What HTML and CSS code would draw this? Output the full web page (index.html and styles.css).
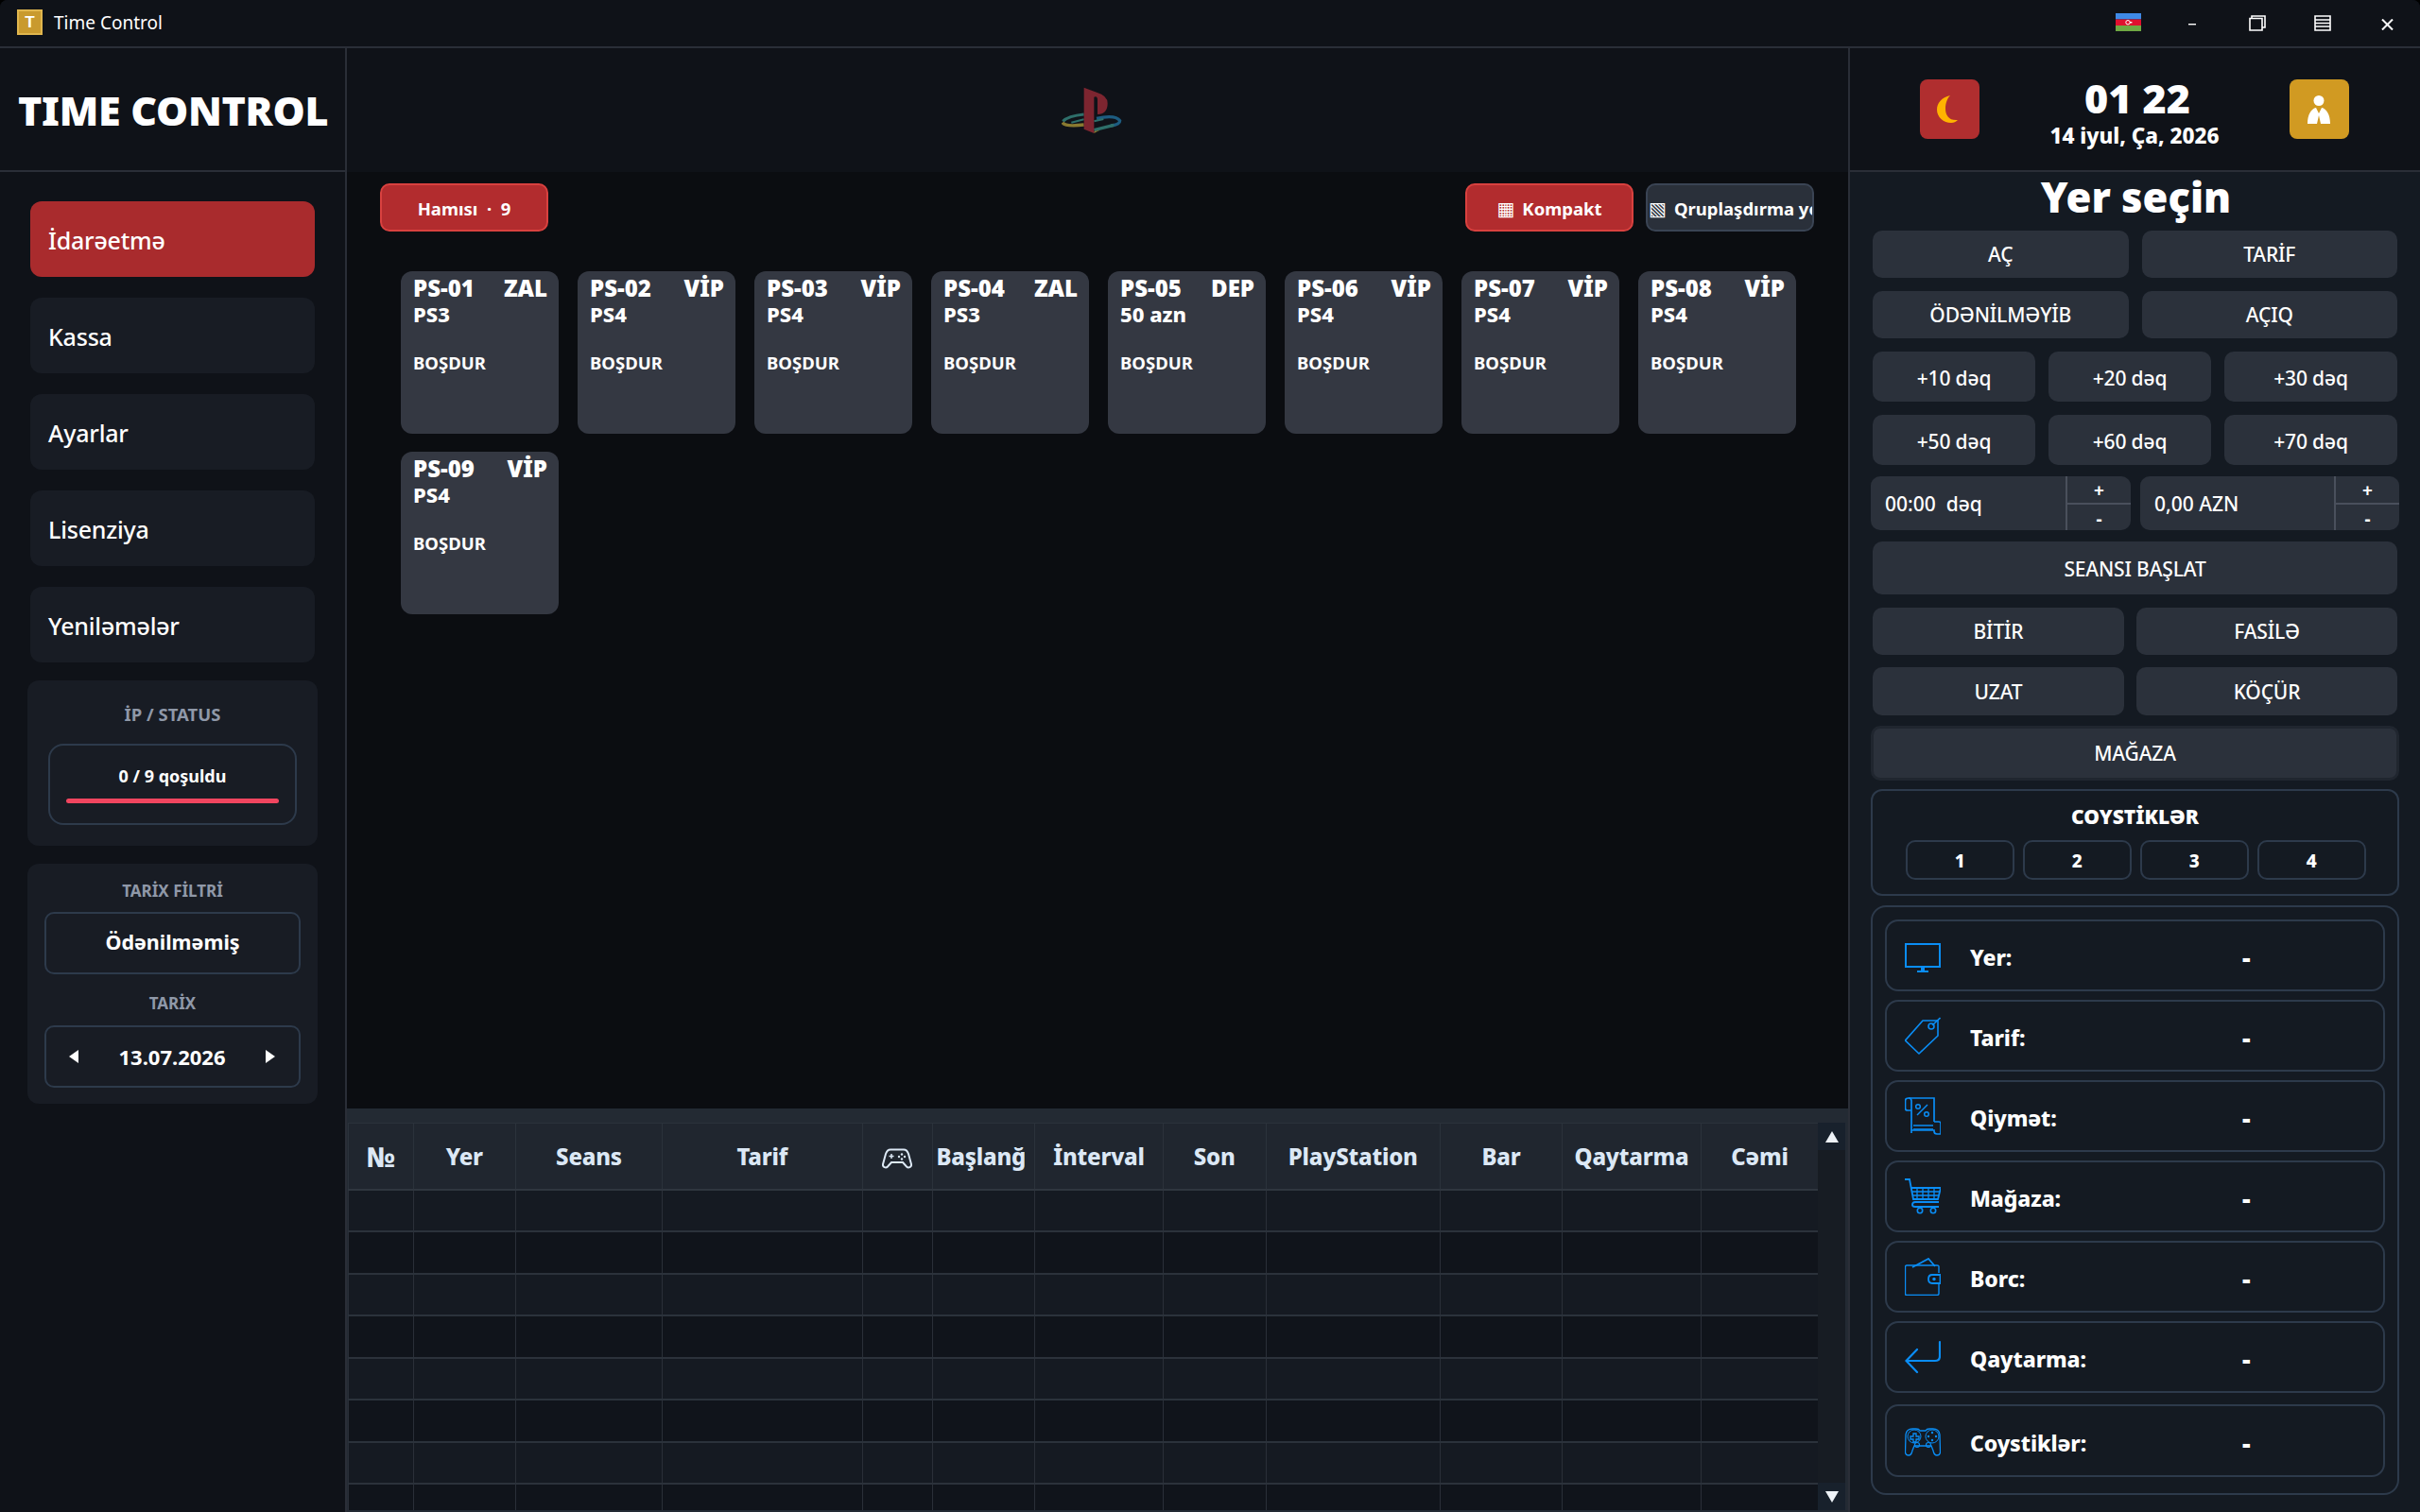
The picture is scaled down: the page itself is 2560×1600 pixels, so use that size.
FILE: index.html
```html
<!DOCTYPE html>
<html>
<head>
    <title>Time Control</title>
    <meta name="viewport" content="width=device-width, initial-scale=1.0">
    <link rel="stylesheet" href="styles.css">
</head>
<body>
<div class="app">
    <header class="titlebar">
        <div class="app-icon">T</div>
        <span class="app-name">Time Control</span>
        <div class="win-controls">
            <svg class="flag" viewBox="0 0 27 19"><rect width="27" height="6.5" fill="#3f8ae6"/><rect y="6.5" width="27" height="6.5" fill="#e0102f"/><rect y="13" width="27" height="6" fill="#6fa843"/><circle cx="13" cy="9.7" r="2.2" fill="none" stroke="#fff" stroke-width="1"/><rect x="15" y="9" width="2.4" height="1.4" fill="#fff"/></svg>
            <svg class="win-min" viewBox="0 0 8 2"><rect width="8" height="1.4" fill="#fff"/></svg>
            <svg class="win-restore" viewBox="0 0 18 17"><path d="M1 3.500H14V16H1Z M3 3V1H17V13H14" fill="none" stroke="#fff" stroke-width="1.6"/></svg>
            <svg class="win-menu" viewBox="0 0 18 17"><path d="M1 1H17V16H1Z M1 5H17 M1 8.5H17 M1 12H17" fill="none" stroke="#fff" stroke-width="1.6"/></svg>
            <svg class="win-close" viewBox="0 0 13 12"><path d="M1 .5 12 11.5 M12 .5 1 11.5" stroke="#fff" stroke-width="2" fill="none"/></svg>
        </div>
    </header>

    <div class="top">
        <div class="brand">TIME CONTROL</div>
        <div class="logo-cell">
            <svg class="ps-logo" viewBox="129 63 228 147">
                <path d="M200 150Q150 155 133 172" fill="none" stroke="#2e6f6a" stroke-width="9"/>
                <path d="M132 176Q140 190 200 183" fill="none" stroke="#8a7a30" stroke-width="10"/>
                <path d="M240 163Q300 150 314 170Q314 182 285 186" fill="none" stroke="#1d5c80" stroke-width="10"/>
                <path d="M232 200 295 184" fill="none" stroke="#2e6f6a" stroke-width="10"/>
                <path d="M160 176 200 166" fill="none" stroke="#2e6f6a" stroke-width="6"/>
                <path d="M232 172 262 165" fill="none" stroke="#2e6f6a" stroke-width="6"/>
                <path d="M232 204 250 200 232 210Z" fill="#8a7a30"/>
                <path d="M200 65V197L232 210V95Q243 90 243 105V150Q275 150 275 115Q275 90 240 80Z" fill="#7d2530"/>
            </svg>
        </div>
        <div class="clock-cell">
            <div class="square-btn red-btn">
                <svg class="moon" viewBox="0 0 22 29" width="22" height="29"><path d="M14 0C5 2 0 8 0 15 0 23 7 29 15 29 18 29 20 28 22 26 13 27 9 21 9 14 9 8 11 3 14 0Z" fill="#ffb300"/></svg>
            </div>
            <div class="clock">
                <div class="clock-time">01 22</div>
                <div class="clock-date">14 iyul, Ça, 2026</div>
            </div>
            <div class="square-btn gold-btn">
                <svg viewBox="0 0 26 30" width="26" height="30"><circle cx="13" cy="5.5" r="5.5" fill="#fff"/><path d="M1 30C1 20 5 14 10 13L13 19 16 13C21 14 25 20 25 30H15L13 21 11 30Z" fill="#fff"/></svg>
            </div>
        </div>
    </div>

    <div class="content">
        <aside class="sidebar">
            <div class="nav-btn active">İdarəetmə</div>
            <div class="nav-btn">Kassa</div>
            <div class="nav-btn">Ayarlar</div>
            <div class="nav-btn">Lisenziya</div>
            <div class="nav-btn">Yeniləmələr</div>

            <div class="side-card status-card">
                <div class="side-title status-title">İP / STATUS</div>
                <div class="status-box">
                    <span>0 / 9 qoşuldu</span>
                    <div class="status-bar"></div>
                </div>
            </div>

            <div class="side-card filter-card">
                <div class="side-title filter-title">TARİX FİLTRİ</div>
                <div class="filter-box">Ödənilməmiş</div>
                <div class="side-title date-title">TARİX</div>
                <div class="filter-box date-box">
                    <svg viewBox="0 0 10 14" width="10" height="16"><path d="M10 0V14L0 7Z" fill="#fff"/></svg>
                    <span>13.07.2026</span>
                    <svg viewBox="0 0 10 14" width="10" height="16"><path d="M0 0V14L10 7Z" fill="#fff"/></svg>
                </div>
            </div>
        </aside>

        <main class="main">
            <div class="board">
                <div class="toolbar">
                    <button class="tool-btn tool-red">Hamısı &nbsp;·&nbsp; 9</button>
                    <div class="toolbar-right">
                        <button class="tool-btn tool-red"><span class="glyph">▦</span>Kompakt</button>
                        <button class="tool-btn tool-dark"><span class="glyph">▧</span>Qruplaşdırma yox</button>
                    </div>
                </div>
                <div class="cards">
                    <div class="card"><div class="card-head"><span>PS-01</span><span>ZAL</span></div><div class="card-type">PS3</div><div class="card-state">BOŞDUR</div></div>
                    <div class="card"><div class="card-head"><span>PS-02</span><span>VİP</span></div><div class="card-type">PS4</div><div class="card-state">BOŞDUR</div></div>
                    <div class="card"><div class="card-head"><span>PS-03</span><span>VİP</span></div><div class="card-type">PS4</div><div class="card-state">BOŞDUR</div></div>
                    <div class="card"><div class="card-head"><span>PS-04</span><span>ZAL</span></div><div class="card-type">PS3</div><div class="card-state">BOŞDUR</div></div>
                    <div class="card"><div class="card-head"><span>PS-05</span><span>DEP</span></div><div class="card-type">50 azn</div><div class="card-state">BOŞDUR</div></div>
                    <div class="card"><div class="card-head"><span>PS-06</span><span>VİP</span></div><div class="card-type">PS4</div><div class="card-state">BOŞDUR</div></div>
                    <div class="card"><div class="card-head"><span>PS-07</span><span>VİP</span></div><div class="card-type">PS4</div><div class="card-state">BOŞDUR</div></div>
                    <div class="card"><div class="card-head"><span>PS-08</span><span>VİP</span></div><div class="card-type">PS4</div><div class="card-state">BOŞDUR</div></div>
                    <div class="card"><div class="card-head"><span>PS-09</span><span>VİP</span></div><div class="card-type">PS4</div><div class="card-state">BOŞDUR</div></div>
                </div>
            </div>

            <div class="table-area">
                <div class="table-clip">
                    <table class="sessions">
                        <colgroup>
                            <col class="c1"><col class="c2"><col class="c3"><col class="c4"><col class="c5"><col class="c6">
                            <col class="c7"><col class="c8"><col class="c9"><col class="c10"><col class="c11"><col class="c12">
                        </colgroup>
                        <thead>
                            <tr>
                                <th class="th-no">№</th><th>Yer</th><th>Seans</th><th>Tarif</th>
                                <th><svg class="th-pad" viewBox="0 0 32 22" width="32" height="22"><path d="M9 1.5H23C25.5 1.5 27 3 28 6L31 17C31.5 20 28 21.500 26 19.500L22 15H10L6 19.500C4 21.500.5 20 1 17L4 6C5 3 6.500 1.5 9 1.500Z" fill="none" stroke="#dce8f5" stroke-width="2"/><path d="M10 6V11M7.500 8.500H12.500" stroke="#dce8f5" stroke-width="1.500"/><circle cx="21" cy="6.500" r="1.200" fill="#dce8f5"/><circle cx="24" cy="9" r="1.200" fill="#dce8f5"/><circle cx="18" cy="9" r="1.200" fill="#dce8f5"/><circle cx="21" cy="11.500" r="1.200" fill="#dce8f5"/></svg></th>
                                <th><span class="th-clip">Başlanğıc</span></th><th>İnterval</th><th>Son</th><th>PlayStation</th><th>Bar</th><th>Qaytarma</th><th>Cəmi</th>
                            </tr>
                        </thead>
                        <tbody>
                            <tr><td></td><td></td><td></td><td></td><td></td><td></td><td></td><td></td><td></td><td></td><td></td><td></td></tr>
                            <tr><td></td><td></td><td></td><td></td><td></td><td></td><td></td><td></td><td></td><td></td><td></td><td></td></tr>
                            <tr><td></td><td></td><td></td><td></td><td></td><td></td><td></td><td></td><td></td><td></td><td></td><td></td></tr>
                            <tr><td></td><td></td><td></td><td></td><td></td><td></td><td></td><td></td><td></td><td></td><td></td><td></td></tr>
                            <tr><td></td><td></td><td></td><td></td><td></td><td></td><td></td><td></td><td></td><td></td><td></td><td></td></tr>
                            <tr><td></td><td></td><td></td><td></td><td></td><td></td><td></td><td></td><td></td><td></td><td></td><td></td></tr>
                            <tr><td></td><td></td><td></td><td></td><td></td><td></td><td></td><td></td><td></td><td></td><td></td><td></td></tr>
                            <tr><td></td><td></td><td></td><td></td><td></td><td></td><td></td><td></td><td></td><td></td><td></td><td></td></tr>
                        </tbody>
                    </table>
                </div>
                <div class="scrollbar">
                    <div class="scroll-btn"><svg viewBox="0 0 14 12" width="14" height="12"><path d="M7 0 14 12H0Z" fill="#eef3f8"/></svg></div>
                    <div class="scroll-btn"><svg viewBox="0 0 14 12" width="14" height="12"><path d="M7 12 14 0H0Z" fill="#eef3f8"/></svg></div>
                </div>
            </div>
        </main>

        <aside class="panel">
            <h2 class="panel-title">Yer seçin</h2>
            <div class="row two">
                <button class="act">AÇ</button><button class="act">TARİF</button>
            </div>
            <div class="row two">
                <button class="act">ÖDƏNİLMƏYİB</button><button class="act">AÇIQ</button>
            </div>
            <div class="row three tall">
                <button class="act">+10 dəq</button><button class="act">+20 dəq</button><button class="act">+30 dəq</button>
            </div>
            <div class="row three tall">
                <button class="act">+50 dəq</button><button class="act">+60 dəq</button><button class="act">+70 dəq</button>
            </div>
            <div class="row spin-row wide">
                <div class="spin spin-left"><span class="spin-value">00:00&nbsp; dəq</span><div class="spin-btns"><span>+</span><span>-</span></div></div>
                <div class="spin spin-right"><span class="spin-value">0,00 AZN</span><div class="spin-btns"><span>+</span><span>-</span></div></div>
            </div>
            <div class="row start-row"><button class="act">SEANSI BAŞLAT</button></div>
            <div class="row action action-1">
                <button class="act">BİTİR</button><button class="act">FASİLƏ</button>
            </div>
            <div class="row action action-2">
                <button class="act">UZAT</button><button class="act">KÖÇÜR</button>
            </div>
            <div class="row shop-row wide"><button class="act shop">MAĞAZA</button></div>

            <section class="pads wide">
                <div class="pads-title">COYSTİKLƏR</div>
                <div class="pads-list">
                    <div class="pad-num">1</div><div class="pad-num">2</div><div class="pad-num">3</div><div class="pad-num">4</div>
                </div>
            </section>

            <section class="info wide">
                <div class="info-row">
                    <svg class="info-ico" viewBox="0 0 38 38"><path d="M1 7H37V31H1Z" fill="none" stroke="#0a8df5" stroke-width="2"/><path d="M17 31H21V35H17Z M13 35H25V37H13Z" fill="#0a8df5"/></svg>
                    <span class="info-label">Yer:</span><span class="info-value">-</span>
                </div>
                <div class="info-row">
                    <svg class="info-ico" viewBox="0 0 38 40"><path d="M19 4H35V20L15 39 .5 25Z" fill="none" stroke="#0a8df5" stroke-width="1.600" stroke-linejoin="round"/><circle cx="28" cy="10" r="3" fill="none" stroke="#0a8df5" stroke-width="1.600"/><path d="M29 9 37.500 1" stroke="#0a8df5" stroke-width="1.600"/></svg>
                    <span class="info-label">Tarif:</span><span class="info-value">-</span>
                </div>
                <div class="info-row">
                    <svg class="info-ico" viewBox="0 0 38 40"><path d="M4 1H31V26 M7 4V38 M31 26H36Q38 26 38 28V39H34Q31 39 31 36V35H7" fill="none" stroke="#0a8df5" stroke-width="1.700"/><path d="M7 14H3Q.5 14 .5 12V4Q.5 1 4 1 7 1 7 4" fill="none" stroke="#0a8df5" stroke-width="1.700"/><path d="M13 19 24 8" stroke="#0a8df5" stroke-width="1.500"/><circle cx="14" cy="10" r="2.300" fill="none" stroke="#0a8df5" stroke-width="1.500"/><circle cx="23" cy="18" r="2.300" fill="none" stroke="#0a8df5" stroke-width="1.500"/><path d="M9 30H30 M9 34H30" stroke="#0a8df5" stroke-width="1.700"/></svg>
                    <span class="info-label">Qiymət:</span><span class="info-value">-</span>
                </div>
                <div class="info-row">
                    <svg class="info-ico" viewBox="0 0 38 38"><path d="M0 1H5L9 22H35L38 10H6" fill="none" stroke="#0a8df5" stroke-width="1.800"/><path d="M8 14H37 M9 18H36 M13 10V22 M19 10V22 M25 10V22 M31 10V22" stroke="#0a8df5" stroke-width="1.300" fill="none"/><path d="M36 25H11Q8 25 8 28 8 30 11 30H36" fill="none" stroke="#0a8df5" stroke-width="1.800"/><circle cx="16" cy="34" r="2.700" fill="none" stroke="#0a8df5" stroke-width="1.600"/><circle cx="30" cy="34" r="2.700" fill="none" stroke="#0a8df5" stroke-width="1.600"/></svg>
                    <span class="info-label">Mağaza:</span><span class="info-value">-</span>
                </div>
                <div class="info-row">
                    <svg class="info-ico" viewBox="0 0 38 40"><path d="M36 16V9Q36 8 34 8H2Q.5 8 .5 10V38Q.5 39.500 2 39.500H34Q36 39.500 36 38V27" fill="none" stroke="#0a8df5" stroke-width="1.400"/><path d="M8 10 25 1 32 9" fill="none" stroke="#0a8df5" stroke-width="1.800"/><path d="M37.500 18V27H29Q25 27 25 22.500 25 18 29 18Z" fill="none" stroke="#0a8df5" stroke-width="1.800"/><circle cx="31" cy="22.500" r="1.700" fill="#0a8df5"/></svg>
                    <span class="info-label">Borc:</span><span class="info-value">-</span>
                </div>
                <div class="info-row">
                    <svg class="info-ico" viewBox="0 0 38 34"><path d="M37 1V16Q37 21 32 21H2" fill="none" stroke="#0a8df5" stroke-width="2.200" stroke-linecap="round"/><path d="M13 9 1.500 21 13 33" fill="none" stroke="#0a8df5" stroke-width="2.200" stroke-linecap="round"/></svg>
                    <span class="info-label">Qaytarma:</span><span class="info-value">-</span>
                </div>
                <div class="info-row last">
                    <svg class="info-ico" viewBox="0 0 38 30"><path d="M8 1H12Q15 1 16 3H22Q23 1 26 1H30Q36 1 37 7L37.500 26Q37 29 34 29 31 29 30 24L28 19H10L8 24Q7 29 4 29 1 29 .5 26L1 7Q2 1 8 1Z" fill="none" stroke="#0a8df5" stroke-width="1.300"/><path d="M6 9H9V6H12V9H15V12H12V15H9V12H6Z" fill="none" stroke="#0a8df5" stroke-width="1.300"/><circle cx="10" cy="9" r="7" fill="none" stroke="#0a8df5" stroke-width="1"/><circle cx="29" cy="9" r="7" fill="none" stroke="#0a8df5" stroke-width="1"/><circle cx="29" cy="5" r="1.200" fill="#0a8df5"/><circle cx="25" cy="9" r="1.200" fill="#0a8df5"/><circle cx="33" cy="9" r="1.200" fill="#0a8df5"/><circle cx="29" cy="13" r="1.200" fill="#0a8df5"/><circle cx="13" cy="18" r="2.500" fill="none" stroke="#0a8df5" stroke-width="1.100"/><circle cx="25" cy="18" r="2.500" fill="none" stroke="#0a8df5" stroke-width="1.100"/></svg>
                    <span class="info-label">Coystiklər:</span><span class="info-value">-</span>
                </div>
            </section>
        </aside>
    </div>
</div>
</body>
</html>
```

FILE: styles.css
```css
* { box-sizing: border-box; }

html, body { margin: 0; height: 100%; background: #000; }

body {
  font-family: "Noto Sans", "Open Sans", Arial, sans-serif;
  color: #fff;
}

.app {
  width: 2560px;
  height: 1600px;
  display: flex;
  flex-direction: column;
  background: #0f1218;
  border-radius: 8px 8px 0 0;
  overflow: hidden;
}

/* title bar */
.titlebar {
  height: 51px;
  flex: none;
  display: flex;
  align-items: center;
  padding: 0 0 2px 18px;
  background: #0f1218;
  border-bottom: 2px solid #2a2e37;
}
.app-icon {
  width: 27px;
  height: 27px;
  background: #c99a2e;
  border: 2px solid #e0b64e;
  font: 700 17px/23px "Liberation Sans", sans-serif;
  text-align: center;
}
.app-name { margin-left: 12px; font-size: 19px; }
.win-controls { margin-left: auto; position: relative; width: 340px; height: 49px; }
.win-controls svg { position: absolute; }
.flag { left: 18px; top: 15px; width: 27px; height: 19px; }
.win-min { left: 95px; top: 26px; width: 8px; height: 2px; }
.win-restore { left: 159px; top: 17px; width: 18px; height: 17px; }
.win-menu { left: 228px; top: 17px; width: 18px; height: 17px; }
.win-close { left: 299px; top: 21px; width: 13px; height: 12px; }

/* top row */
.top {
  height: 131px;
  flex: none;
  display: grid;
  grid-template-columns: 367px 1590px 1fr;
  border-bottom: 2px solid #2a2e37;
}
.brand {
  border-right: 2px solid #2a2e37;
  padding-left: 19px;
  line-height: 131px;
  font-size: 43px;
  font-weight: 900;
  letter-spacing: -.3px;
}
.logo-cell {
  display: flex;
  align-items: center;
  justify-content: center;
  border-right: 2px solid #2a2e37;
  background: #0f1218;
}
.ps-logo { width: 76px; height: 49px; }
.clock-cell {
  display: flex;
  justify-content: space-between;
  align-items: flex-start;
  padding: 33px 75px 0 74px;
}
.square-btn {
  width: 63px;
  height: 63px;
  border-radius: 8px;
  display: flex;
  align-items: center;
  justify-content: center;
}
.red-btn { background: #b02e2f; }
.gold-btn { background: #d19a22; }
.moon { margin-right: 6px; }
.clock { text-align: center; margin-left: 6px; }
.clock-time { font-size: 43px; font-weight: 900; line-height: 44px; margin-top: -2px; }
.clock-date { font-size: 22.5px; font-weight: 800; line-height: 30px; margin-top: 3px; padding-right: 6px; }

/* main content */
.content {
  flex: 1;
  min-height: 0;
  display: grid;
  grid-template-columns: 367px 1590px 1fr;
  grid-template-rows: minmax(0, 1fr);
}

.sidebar {
  background: #0f1218;
  border-right: 2px solid #2a2e37;
  padding: 31px 0 0 32px;
  display: flex;
  flex-direction: column;
  gap: 22px;
}
.nav-btn {
  width: 301px;
  height: 80px;
  background: #181c24;
  border-radius: 12px;
  padding: 2px 0 0 19px;
  line-height: 78px;
  font-size: 25px;
  font-weight: 500;
  letter-spacing: -.2px;
}
.nav-btn.active { background: #a92b2d; }

.side-card {
  width: 307px;
  margin-left: -3px;
  background: #181c24;
  border-radius: 12px;
  text-align: center;
}
.status-card { height: 175px; margin-top: -3px; padding: 22px 22px 0; }
.side-title { font-size: 17px; font-weight: 700; line-height: 28px; color: #8f98a8; }
.status-title { font-size: 18.500px; }
.status-box {
  height: 86px;
  margin-top: 17px;
  border: 2px solid #2d3a4b;
  border-radius: 16px;
  font-size: 18px;
  font-weight: 700;
  padding-top: 18px;
  line-height: 28px;
}
.status-bar {
  height: 5px;
  margin: 10px 17px 0;
  border-radius: 3px;
  background: #f0455f;
}
.filter-card { height: 254px; margin-top: -3px; padding: 15px 18px 0; }
.filter-box {
  height: 66px;
  margin-top: 8px;
  border: 2px solid #2d3a4b;
  border-radius: 10px;
  font-size: 21.500px;
  font-weight: 700;
  line-height: 60px;
}
.date-title { margin-top: 17px; }
.date-box {
  margin-top: 9px;
  font-size: 22px;
  display: flex;
  align-items: center;
  justify-content: space-between;
  padding: 0 25px 0 24px;
}

.main { display: flex; flex-direction: column; min-width: 0; min-height: 0; background: #0b0d11; border-right: 2px solid #2a2e37; }
.board { height: 991px; flex: none; padding: 12px 36px 0 35px; }
.toolbar { display: flex; justify-content: space-between; }
.toolbar-right { display: flex; gap: 13px; }
.tool-btn {
  height: 51px;
  width: 178px;
  padding: 2px 0 0;
  border-radius: 10px;
  font-family: inherit;
  font-size: 18.500px;
  font-weight: 700;
  color: #fff;
  white-space: nowrap;
  overflow: hidden;
}
.tool-red { background: #b22c2e; border: 2px solid #d9413f; }
.tool-dark { background: #2a303a; border: 2px solid #3a4454; text-align: left; padding-left: 1px; }
.glyph { font-family: "DejaVu Sans", sans-serif; font-size: 20px; font-weight: 400; margin-right: 8px; }

.cards {
  margin: 42px 0 0 22px;
  display: grid;
  grid-template-columns: repeat(8, 167px);
  grid-auto-rows: 172px;
  column-gap: 20px;
  row-gap: 19px;
}
.card { background: #343842; border-radius: 12px; padding: 3px 12px 0 13px; }
.card-head { display: flex; justify-content: space-between; font-size: 24px; font-weight: 900; line-height: 30px; }
.card-type { font-size: 22px; font-weight: 800; line-height: 25px; }
.card-state { font-size: 18.500px; font-weight: 700; line-height: 26px; margin-top: 26px; }

/* table */
.table-area {
  flex: 1;
  min-height: 0;
  display: flex;
  background: #232a33;
  padding: 15px 1px 2px 1px;
}
.table-clip { width: 1555px; overflow: hidden; }
.sessions { width: 1555px; table-layout: fixed; border-collapse: collapse; }
.c1 { width: 68.5px; } .c2 { width: 108.5px; } .c3 { width: 155px; } .c4 { width: 211.5px; }
.c5 { width: 74px; } .c6 { width: 108.5px; } .c7 { width: 136px; } .c8 { width: 108.5px; }
.c9 { width: 184.5px; } .c10 { width: 129px; } .c11 { width: 147px; } .c12 { width: 124px; }
.sessions th {
  height: 70px;
  padding: 0 7px;
  background: #20262f;
  border: 1px solid #2b323b;
  border-bottom: 2px solid #2f363f;
  color: #dce8f5;
  font-size: 24px;
  font-weight: 800;
  letter-spacing: -.2px;
  white-space: nowrap;
  overflow: hidden;
}
.sessions th.th-no { font-size: 29px; padding: 0; }
.th-clip { display: block; width: 93px; margin-left: -3px; overflow: hidden; text-align: left; }
.sessions td {
  height: 44.5px;
  padding: 0;
  border: 1px solid #2a2f38;
  border-bottom: 2px solid #2b323b;
}
.sessions tbody tr:nth-child(odd) { background: #151a22; }
.sessions tbody tr:nth-child(even) { background: #10141b; }
.th-pad { vertical-align: middle; }
.scrollbar {
  width: 29px;
  background: #171c23;
  display: flex;
  flex-direction: column;
  justify-content: space-between;
}
.scroll-btn {
  height: 29px;
  background: #18212c;
  display: flex;
  align-items: center;
  justify-content: center;
}

/* right panel */
.panel { background: #141a22; padding: 0 24px; display: flex; flex-direction: column; }
.panel-title { margin: 0; height: 62px; font-size: 43.500px; font-weight: 900; line-height: 52px; text-align: center; padding-left: 2px; }
.row { display: grid; gap: 14px; margin-bottom: 14px; }
.two { grid-template-columns: 1fr 1fr; height: 50px; }
.three { grid-template-columns: 172px 172px 1fr; height: 53px; }
.three.tall + .wide { margin-top: -2px; }
.act {
  border: none;
  border-radius: 10px;
  background: #2b313b;
  color: #fff;
  font-family: inherit;
  font-size: 21px;
  font-weight: 500;
  letter-spacing: -.15px;
  padding: 2px 0 0;
}
.two .act, .action .act, .act.shop { padding-top: 0; }
.wide { margin-left: -2px; margin-right: -2px; }
.spin-row { grid-template-columns: 275px 274px; gap: 10px; height: 57px; margin-bottom: 12px; }
.spin { display: flex; background: #2b313b; border-radius: 10px; overflow: hidden; }
.spin-value { flex: 1; padding-left: 15px; line-height: 59px; font-size: 21px; font-weight: 500; }
.spin-left .spin-btns { width: 69px; }
.spin-right .spin-btns { width: 69px; }
.spin-btns { display: flex; flex-direction: column; border-left: 2px solid #4a505c; }
.spin-btns span { flex: 1; text-align: center; font-size: 19px; font-weight: 700; line-height: 31px; overflow: hidden; }
.spin-btns span:first-child { border-bottom: 2px solid #4a505c; }
.start-row { height: 56px; }
.action { grid-template-columns: 266px 1fr; gap: 13px; }
.action-1 { height: 50px; margin-bottom: 13px; }
.action-2 { height: 51px; margin-bottom: 11px; }
.shop-row { height: 58px; margin-bottom: 9px; }
.shop { border: 3px solid #20262f; }

.pads {
  height: 113px;
  border: 2px solid #2d3a4b;
  border-radius: 12px;
  margin-bottom: 10px;
  text-align: center;
}
.pads-title { font-size: 21px; font-weight: 900; line-height: 30px; margin-top: 12px; }
.pads-list { display: grid; grid-template-columns: repeat(4, 114.500px); column-gap: 9.500px; padding-left: 35px; margin-top: 10px; }
.pad-num {
  height: 42px;
  border: 2px solid #2d3a4b;
  border-radius: 10px;
  font-size: 19px;
  font-weight: 800;
  line-height: 40px;
}

.info {
  height: 624px;
  border: 2px solid #2d3a4b;
  border-radius: 16px;
  padding: 13px 13px 0;
  display: flex;
  flex-direction: column;
  gap: 9px;
}
.info-row {
  height: 76px;
  flex: none;
  border: 2px solid #2d3a4b;
  border-radius: 14px;
  display: flex;
  align-items: center;
  padding-left: 19px;
}
.info-row.last { margin-top: 3px; height: 77px; padding-top: 2px; }
.info-ico { width: 38px; height: 40px; flex: none; }
.info-label { width: 288px; margin-left: 31px; padding-top: 3px; font-size: 23px; font-weight: 800; letter-spacing: -.1px; }
.info-value { padding-top: 3px; font-size: 27px; font-weight: 900; line-height: 32px; }
```
